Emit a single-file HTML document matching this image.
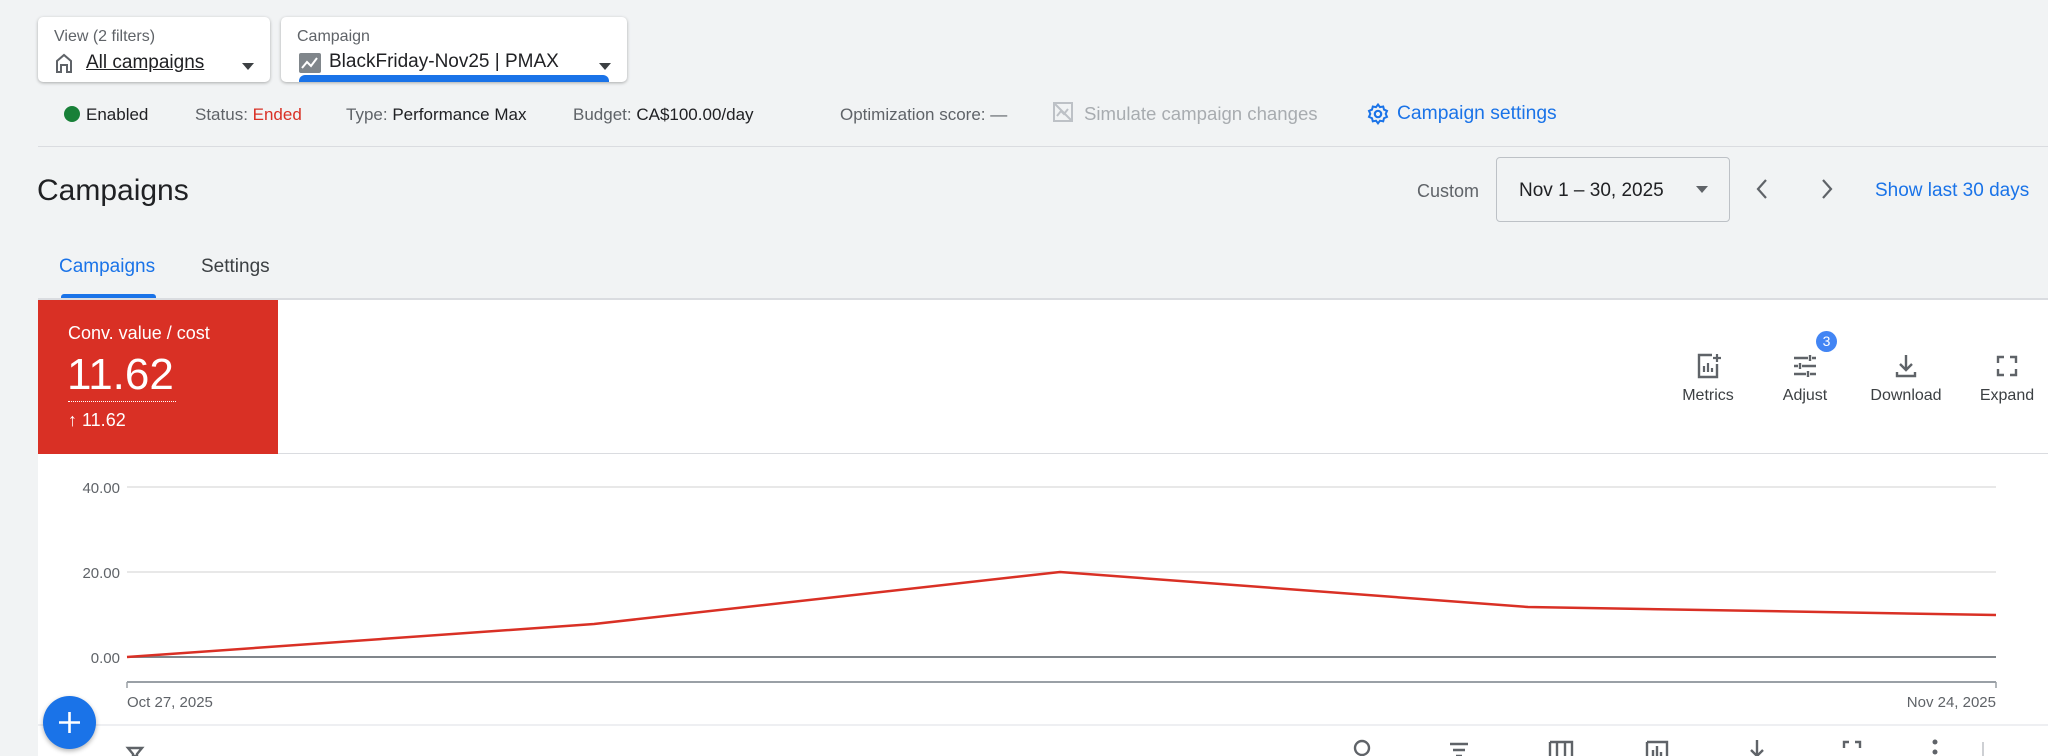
<!DOCTYPE html>
<html><head><meta charset="utf-8"><style>
*{margin:0;padding:0;box-sizing:border-box}
body{width:2048px;height:756px;background:#f1f3f4;font-family:"Liberation Sans",Arial,sans-serif;position:relative;overflow:hidden;color:#3c4043}
.a{position:absolute;white-space:nowrap}
.card{position:absolute;background:#fff;border-radius:5px;box-shadow:0 1px 3px rgba(0,0,0,.3)}
.tri{position:absolute;width:0;height:0;border-left:6px solid transparent;border-right:6px solid transparent;border-top:7px solid #3c4043}
.s{font-size:17px;color:#5f6368;top:105px}
.s b{font-weight:normal;color:#202124}
.ic{position:absolute;text-align:center;font-size:16px;color:#3c4043;width:90px}
</style></head><body>

<div class="card" style="left:38px;top:17px;width:232px;height:65px">
 <div class="a" style="left:16px;top:11px;font-size:16px;color:#5f6368">View (2 filters)</div>
 <svg class="a" style="left:16px;top:35px" width="20" height="22" viewBox="0 0 20 22"><path d="M3 20V9l7-6 7 6v11h-4v-7H7v7z" fill="none" stroke="#5f6368" stroke-width="2"/></svg>
 <div class="a" style="left:48px;top:35px;font-size:19px;color:#202124;text-decoration:underline">All campaigns</div>
 <div class="tri" style="left:204px;top:46px"></div>
</div>
<div class="card" style="left:281px;top:17px;width:346px;height:65px;overflow:hidden">
 <div class="a" style="left:16px;top:11px;font-size:16px;color:#5f6368">Campaign</div>
 <svg class="a" style="left:18px;top:36px" width="22" height="20" viewBox="0 0 22 20"><rect width="22" height="20" rx="2" fill="#80868b"/><path d="M3 15l5-6 4 4 6-8" fill="none" stroke="#fff" stroke-width="2"/></svg>
 <div class="a" style="left:48px;top:34px;font-size:19px;color:#202124">BlackFriday-Nov25 | PMAX</div>
 <div class="tri" style="left:318px;top:46px"></div>
 <div class="a" style="left:18px;top:58px;width:310px;height:12px;background:#1a73e8;border-radius:6px 6px 0 0"></div>
</div>

<div class="a" style="left:64px;top:106px;width:16px;height:16px;border-radius:50%;background:#188038"></div>
<div class="a s" style="left:86px;color:#202124">Enabled</div>
<div class="a s" style="left:195px">Status: <span style="color:#d93025">Ended</span></div>
<div class="a s" style="left:346px">Type: <b>Performance Max</b></div>
<div class="a s" style="left:573px">Budget: <b>CA$100.00/day</b></div>
<div class="a s" style="left:840px">Optimization score: —</div>
<svg class="a" style="left:1051px;top:100px" width="24" height="24" viewBox="0 0 24 24"><rect x="3" y="3" width="18" height="18" fill="none" stroke="#bdc1c6" stroke-width="2"/><path d="M3 3l18 18M6 16l4-5 3 3 4-5" fill="none" stroke="#bdc1c6" stroke-width="2"/></svg>
<div class="a s" style="left:1084px;color:#a8acb0;font-size:18.6px;top:103px">Simulate campaign changes</div>
<svg class="a" style="left:1366px;top:102px" width="24" height="24" viewBox="0 0 24 24"><circle cx="12" cy="12" r="3.2" fill="none" stroke="#1a73e8" stroke-width="2.2"/><path d="M12 2.5l2 2.6 3.2-.6.8 3.1 3 1.3-1.3 3 1.3 3-3 1.3-.8 3.1-3.2-.6-2 2.6-2-2.6-3.2.6-.8-3.1-3-1.3 1.3-3-1.3-3 3-1.3.8-3.1 3.2.6z" fill="none" stroke="#1a73e8" stroke-width="2"/></svg>
<div class="a" style="left:1397px;top:103px;font-size:19.3px;color:#1a73e8">Campaign settings</div>

<div class="a" style="left:38px;top:146px;width:2010px;height:1px;background:#dadce0"></div>
<div class="a" style="left:37px;top:174px;font-size:30px;color:#202124">Campaigns</div>
<div class="a" style="left:1417px;top:181px;font-size:18px;color:#5f6368">Custom</div>
<div class="a" style="left:1496px;top:157px;width:234px;height:65px;border:1px solid #bdc1c6;border-radius:4px"></div>
<div class="a" style="left:1519px;top:180px;font-size:19px;color:#202124">Nov 1 – 30, 2025</div>
<div class="tri" style="left:1696px;top:186px;border-top-color:#5f6368"></div>
<svg class="a" style="left:1752px;top:177px" width="20" height="24" viewBox="0 0 20 24"><path d="M14 3l-8 9 8 9" fill="none" stroke="#5f6368" stroke-width="2.2"/></svg>
<svg class="a" style="left:1817px;top:177px" width="20" height="24" viewBox="0 0 20 24"><path d="M6 3l8 9-8 9" fill="none" stroke="#5f6368" stroke-width="2.2"/></svg>
<div class="a" style="left:1875px;top:180px;font-size:19px;color:#1a73e8">Show last 30 days</div>

<div class="a" style="left:59px;top:256px;font-size:19px;color:#1a73e8">Campaigns</div>
<div class="a" style="left:201px;top:256px;font-size:19px;color:#3c4043">Settings</div>
<div class="a" style="left:61px;top:294px;width:95px;height:5px;background:#1a73e8;border-radius:3px 3px 0 0"></div>
<div class="a" style="left:38px;top:298px;width:2010px;height:2px;background:#dadce0"></div>

<div class="a" style="left:38px;top:300px;width:2010px;height:456px;background:#fff"></div>
<div class="a" style="left:38px;top:300px;width:240px;height:154px;background:#d93025"></div>
<div class="a" style="left:68px;top:323px;font-size:18px;color:#fff">Conv. value / cost</div>
<div class="a" style="left:67px;top:350px;font-size:44px;color:#fff">11.62</div>
<div class="a" style="left:68px;top:401px;width:108px;border-top:1px dotted #fff"></div>
<div class="a" style="left:68px;top:410px;font-size:18px;color:#fff">↑ 11.62</div>
<div class="a" style="left:278px;top:453px;width:1770px;height:1px;background:#dadce0"></div>

<svg class="a" style="left:1696px;top:352px" width="26" height="28" viewBox="0 0 26 28"><path d="M16 3H3v22h18V12" fill="none" stroke="#5f6368" stroke-width="2.4"/><path d="M8 20v-6M12 20v-9M16 20v-4M21 2v8M17 6h8" stroke="#5f6368" stroke-width="2.2"/></svg>
<div class="ic" style="left:1663px;top:387px">Metrics</div>
<svg class="a" style="left:1792px;top:353px" width="26" height="26" viewBox="0 0 26 26"><path d="M2 5h14M20 5h4M2 13h4M10 13h14M2 21h12M18 21h6M18 2v6M8 10v6M16 18v6" stroke="#5f6368" stroke-width="2.4"/></svg>
<div class="a" style="left:1816px;top:331px;width:21px;height:21px;border-radius:50%;background:#4285f4;color:#fff;font-size:14px;text-align:center;line-height:21px">3</div>
<div class="ic" style="left:1760px;top:387px">Adjust</div>
<svg class="a" style="left:1894px;top:353px" width="24" height="26" viewBox="0 0 24 26"><path d="M12 2v15M6 11l6 6 6-6M3 19v4h18v-4" fill="none" stroke="#5f6368" stroke-width="2.4"/></svg>
<div class="ic" style="left:1861px;top:387px">Download</div>
<svg class="a" style="left:1995px;top:354px" width="24" height="24" viewBox="0 0 24 24"><path d="M3 9V3h6M15 3h6v6M21 15v6h-6M9 21H3v-6" fill="none" stroke="#5f6368" stroke-width="2.4"/></svg>
<div class="ic" style="left:1962px;top:387px">Expand</div>

<svg class="a" style="left:0;top:0" width="2048" height="756">
 <g font-family="Liberation Sans, Arial, sans-serif" font-size="15" fill="#5f6368" text-anchor="end">
  <text x="120" y="493">40.00</text><text x="120" y="578">20.00</text><text x="120" y="663">0.00</text>
 </g>
 <line x1="127" y1="487" x2="1996" y2="487" stroke="#e0e0e0" stroke-width="1.5"/>
 <line x1="127" y1="572" x2="1996" y2="572" stroke="#e0e0e0" stroke-width="1.5"/>
 <line x1="127" y1="657" x2="1996" y2="657" stroke="#80868b" stroke-width="2"/>
 <line x1="127" y1="682" x2="1996" y2="682" stroke="#9aa0a6" stroke-width="2"/>
 <line x1="127" y1="682" x2="127" y2="688" stroke="#9aa0a6" stroke-width="1.5"/>
 <line x1="1996" y1="682" x2="1996" y2="688" stroke="#9aa0a6" stroke-width="1.5"/>
 <polyline points="127,657 594,624 1060,572 1528,607 1996,615" fill="none" stroke="#d93025" stroke-width="2.5"/>
 <text x="127" y="707" font-family="Liberation Sans, Arial, sans-serif" font-size="15" fill="#5f6368">Oct 27, 2025</text>
 <text x="1996" y="707" text-anchor="end" font-family="Liberation Sans, Arial, sans-serif" font-size="15" fill="#5f6368">Nov 24, 2025</text>
 <line x1="38" y1="725" x2="2048" y2="725" stroke="#e8eaed" stroke-width="1.5"/>
 <g stroke="#5f6368" stroke-width="2.4" fill="none">
  <circle cx="1362" cy="748" r="7"/>
  <path d="M1450 744h18M1453 750h12M1456 756h6"/>
  <path d="M1550 742h22v16M1550 742v16M1557 742v16M1565 742v16"/>
  <path d="M1647 742h20v16M1647 742v16M1653 756v-6M1657 756v-10M1661 756v-4"/>
  <path d="M1757 740v16M1751 750l6 6 6-6"/>
  <path d="M1844 748v-6h5M1855 742h5v6"/>
 </g>
 <circle cx="1935" cy="742" r="2.5" fill="#5f6368"/><circle cx="1935" cy="752" r="2.5" fill="#5f6368"/>
 <line x1="1983" y1="742" x2="1983" y2="756" stroke="#bdc1c6" stroke-width="1.5"/>
 <path d="M128 748h14l-5 6v2h-4v-2z" fill="none" stroke="#5f6368" stroke-width="2.4"/>
</svg>

<div class="a" style="left:43px;top:696px;width:53px;height:53px;border-radius:50%;background:#1a73e8;box-shadow:0 2px 5px rgba(0,0,0,.3)"></div>
<svg class="a" style="left:57px;top:710px" width="25" height="25" viewBox="0 0 25 25"><path d="M12.5 2v21M2 12.5h21" stroke="#fff" stroke-width="2.6"/></svg>
</body></html>
